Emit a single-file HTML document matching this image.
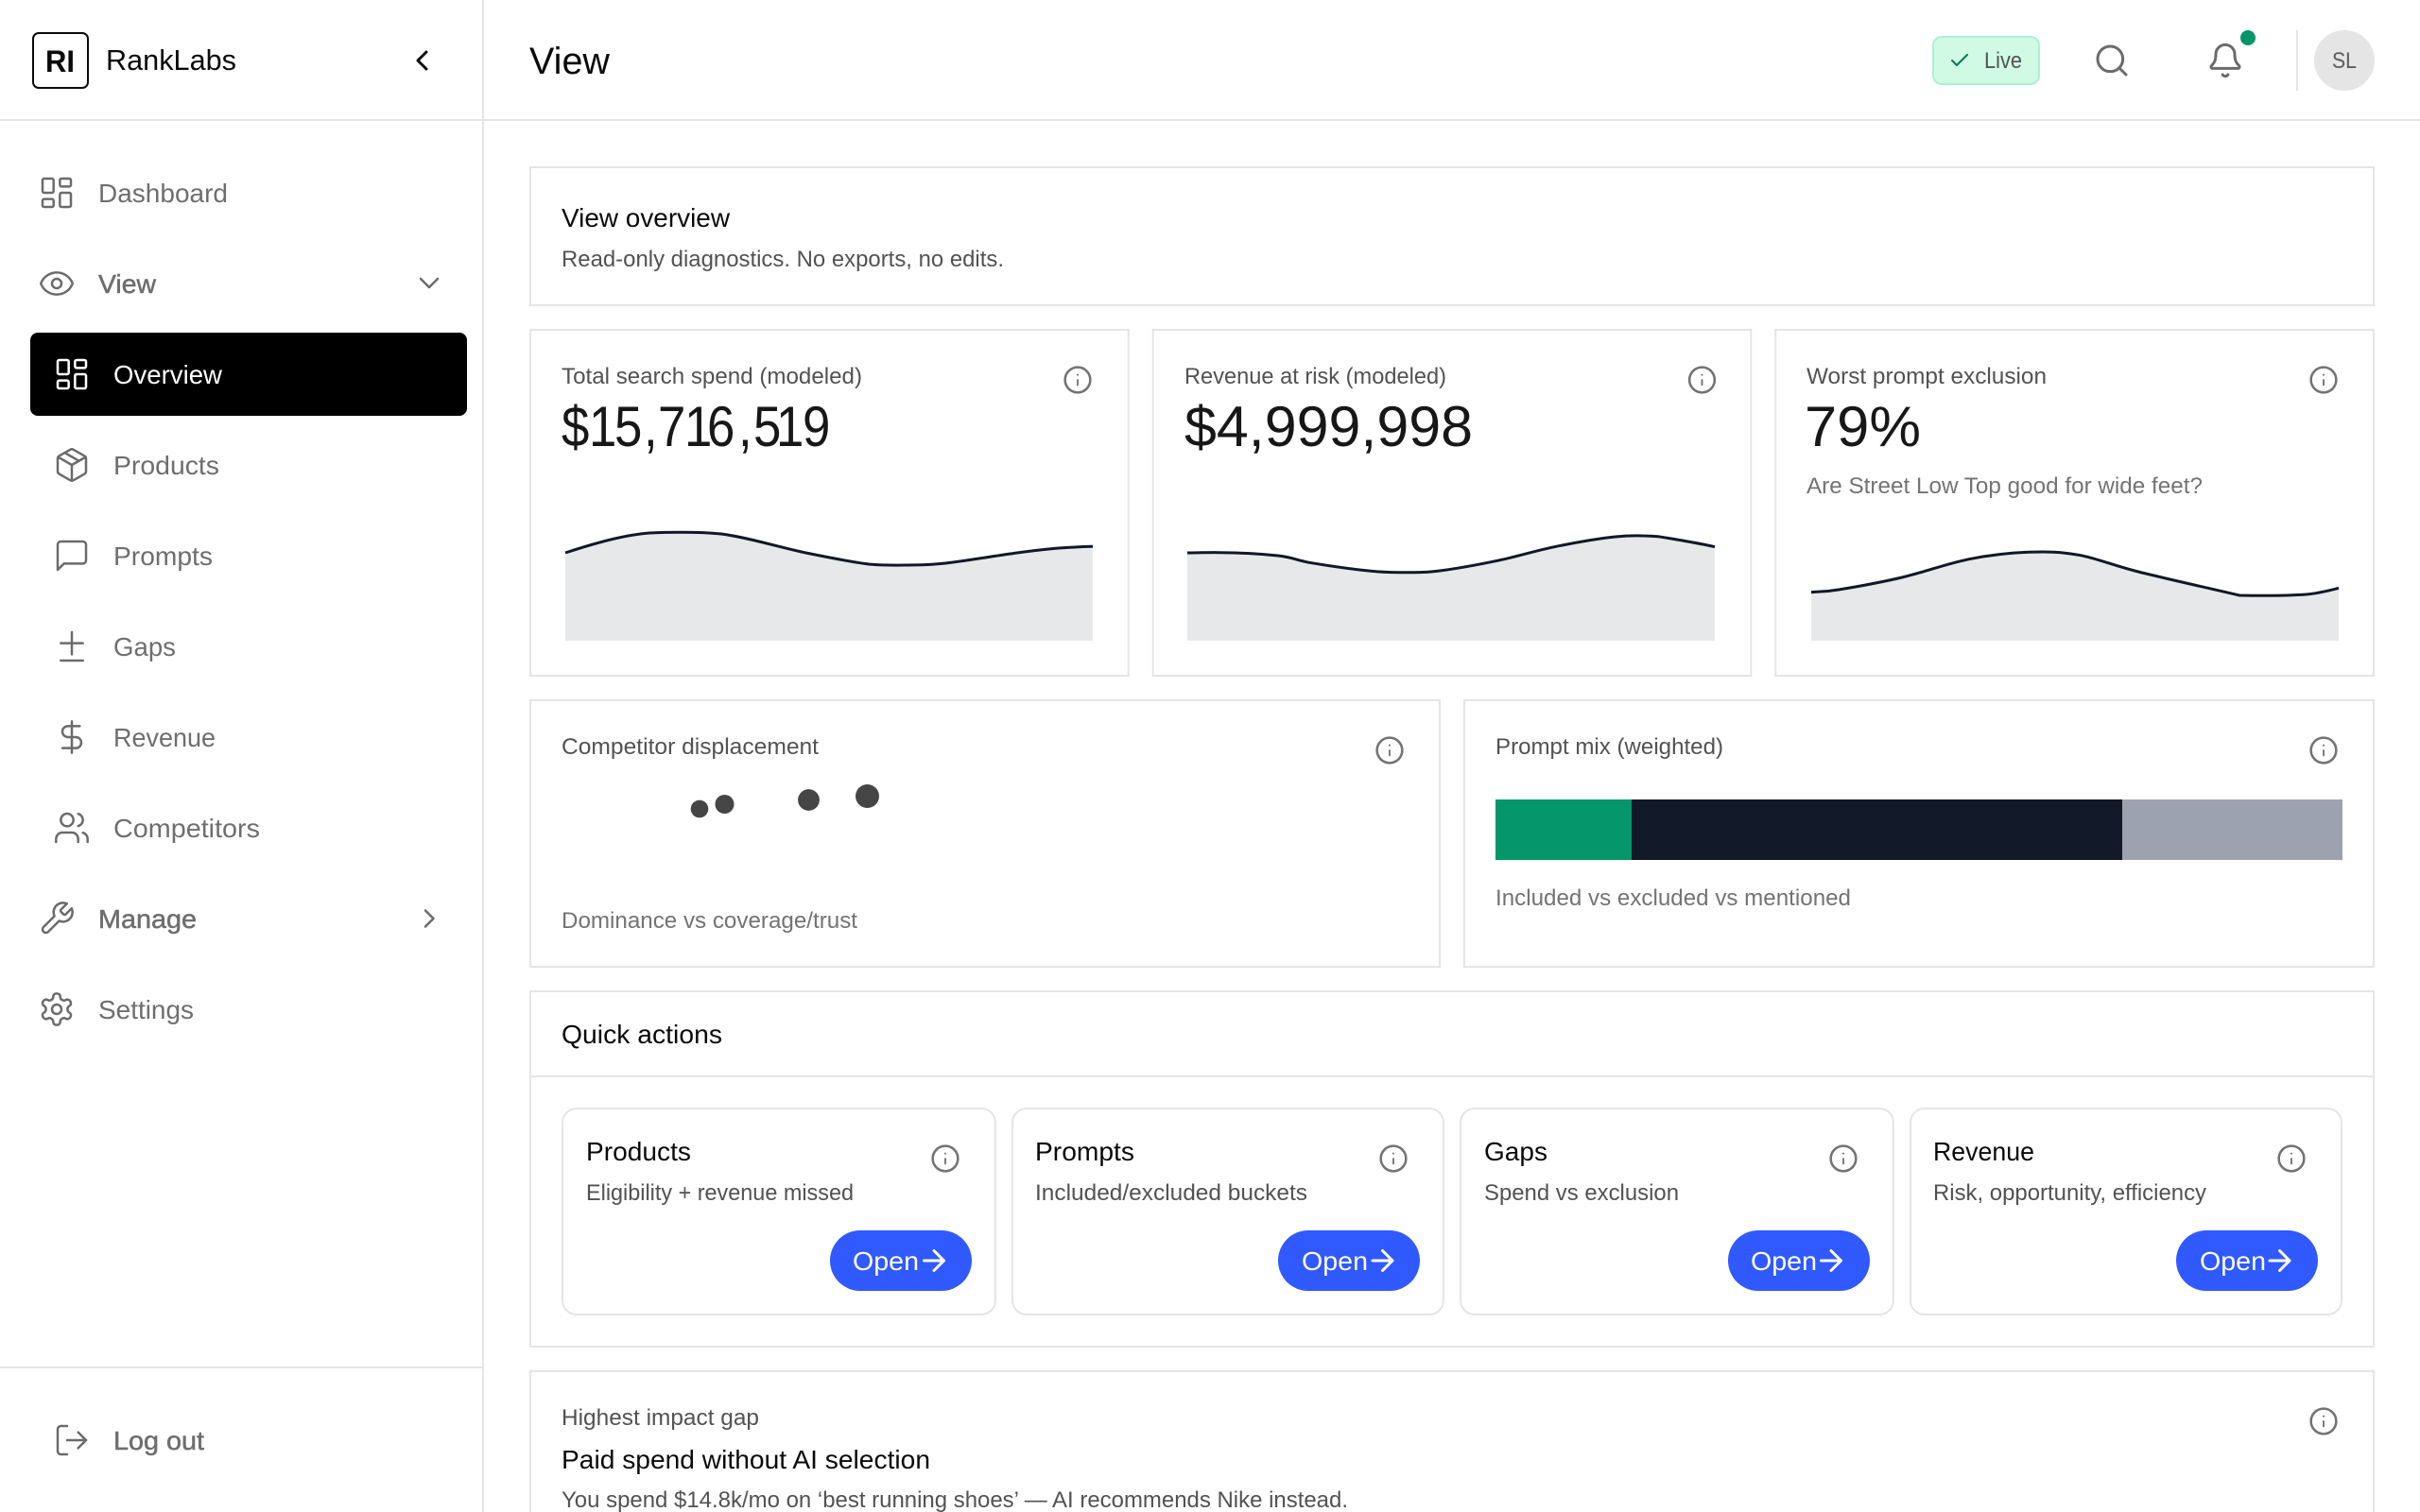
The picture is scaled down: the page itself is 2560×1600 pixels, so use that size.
<!DOCTYPE html>
<html lang="en">
<head>
<meta charset="utf-8">
<title>RankLabs - View</title>
<style>
html,body{margin:0;padding:0;width:2560px;height:1600px;overflow:hidden;background:#fff}
svg{display:block;position:absolute;left:0;top:0}
text{font-family:"Liberation Sans",Arial,sans-serif;white-space:pre}
.ic{fill:none;stroke:#6b6b6b;stroke-width:1.5;stroke-linecap:round;stroke-linejoin:round}
.side{font-size:28px;fill:#6e6e6e}
.med{stroke:#6e6e6e;stroke-width:.5px}
.label{font-size:24px;fill:#525252}
.sub{font-size:24px;fill:#737373}
.t28{font-size:28px;fill:#0a0a0a}
.num{font-size:60px;fill:#171717}
.card{fill:#fff;stroke:#e5e5e5;stroke-width:2}
.area{fill:#e7e8ea}
.line{fill:none;stroke:#111827;stroke-width:3}
.btn{fill:#3059ff}
.open{font-size:28px;fill:#fff}
</style>
</head>
<body>
<svg width="2560" height="1600" viewBox="0 0 2560 1600" xmlns="http://www.w3.org/2000/svg">
<defs>
  <g id="info"><g transform="scale(1.3333)" fill="none" stroke="#737373" stroke-width="1.9" stroke-linecap="round" stroke-linejoin="round"><circle cx="12" cy="12" r="10"/><path d="M12 16v-4" stroke-width="1.4"/><path d="M12 8h.01" stroke-width="1.6"/></g></g>
  <g id="dash"><rect width="7" height="9" x="3" y="3" rx="1"/><rect width="7" height="5" x="14" y="3" rx="1"/><rect width="7" height="9" x="14" y="12" rx="1"/><rect width="7" height="5" x="3" y="16" rx="1"/></g>
  <g id="arrow"><g transform="scale(1.5)" fill="none" stroke="#fff" stroke-width="2" stroke-linecap="round" stroke-linejoin="round"><path d="M5 12h14"/><path d="m12 5 7 7-7 7"/></g></g>
</defs>

<rect width="2560" height="1600" fill="#fff"/>

<!-- structure lines -->
<rect x="510" y="0" width="2" height="1600" fill="#e5e5e5"/>
<rect x="0" y="126" width="2560" height="2" fill="#e5e5e5"/>
<rect x="0" y="1446" width="510" height="2" fill="#e5e5e5"/>

<!-- logo -->
<rect x="35" y="35" width="58" height="58" rx="6" fill="#fff" stroke="#0a0a0a" stroke-width="2"/>
<text x="48" y="76" font-size="32" font-weight="700" fill="#0a0a0a" textLength="31" lengthAdjust="spacingAndGlyphs">RI</text>
<text x="112" y="74" font-size="31" fill="#0a0a0a" textLength="138" lengthAdjust="spacingAndGlyphs">RankLabs</text>
<path d="M451 55 442 64 451 73" fill="none" stroke="#0a0a0a" stroke-width="3" stroke-linecap="round" stroke-linejoin="round"/>

<!-- sidebar nav -->
<g transform="translate(40 184) scale(1.6667)" class="ic"><use href="#dash"/></g>
<text x="104" y="214" class="side" textLength="137" lengthAdjust="spacingAndGlyphs">Dashboard</text>

<g transform="translate(40 280) scale(1.6667)" class="ic"><path d="M2.062 12.348a1 1 0 0 1 0-.696 10.75 10.75 0 0 1 19.876 0 1 1 0 0 1 0 .696 10.75 10.75 0 0 1-19.876 0"/><circle cx="12" cy="12" r="3"/></g>
<text x="104" y="310" class="side med" textLength="61" lengthAdjust="spacingAndGlyphs">View</text>
<path d="M445 295 454 304 463 295" fill="none" stroke="#6b6b6b" stroke-width="2.5" stroke-linecap="round" stroke-linejoin="round"/>

<rect x="32" y="352" width="462" height="88" rx="8" fill="#000"/>
<g transform="translate(56 376) scale(1.6667)" class="ic" style="stroke:#fff"><use href="#dash"/></g>
<text x="120" y="406" font-size="28" fill="#fff" textLength="115" lengthAdjust="spacingAndGlyphs">Overview</text>

<g transform="translate(56 472) scale(1.6667)" class="ic"><path d="m7.5 4.27 9 5.15"/><path d="M21 8a2 2 0 0 0-1-1.73l-7-4a2 2 0 0 0-2 0l-7 4A2 2 0 0 0 3 8v8a2 2 0 0 0 1 1.73l7 4a2 2 0 0 0 2 0l7-4A2 2 0 0 0 21 16Z"/><path d="m3.3 7 8.7 5 8.7-5"/><path d="M12 22V12"/></g>
<text x="120" y="502" class="side" textLength="112" lengthAdjust="spacingAndGlyphs">Products</text>

<g transform="translate(56 568) scale(1.6667)" class="ic"><path d="M21 15a2 2 0 0 1-2 2H7l-4 4V5a2 2 0 0 1 2-2h14a2 2 0 0 1 2 2z"/></g>
<text x="120" y="598" class="side" textLength="105" lengthAdjust="spacingAndGlyphs">Prompts</text>

<g transform="translate(56 664) scale(1.6667)" class="ic"><path d="M12 3v14"/><path d="M5 10h14"/><path d="M5 21h14"/></g>
<text x="120" y="694" class="side" textLength="66" lengthAdjust="spacingAndGlyphs">Gaps</text>

<g transform="translate(56 760) scale(1.6667)" class="ic"><path d="M12 2v20"/><path d="M17 5H9.5a3.5 3.5 0 0 0 0 7h5a3.5 3.5 0 0 1 0 7H6"/></g>
<text x="120" y="790" class="side" textLength="108" lengthAdjust="spacingAndGlyphs">Revenue</text>

<g transform="translate(56 856) scale(1.6667)" class="ic"><path d="M16 21v-2a4 4 0 0 0-4-4H6a4 4 0 0 0-4 4v2"/><circle cx="9" cy="7" r="4"/><path d="M22 21v-2a4 4 0 0 0-3-3.87"/><path d="M16 3.13a4 4 0 0 1 0 7.75"/></g>
<text x="120" y="886" class="side" textLength="155" lengthAdjust="spacingAndGlyphs">Competitors</text>

<g transform="translate(40 952) scale(1.6667)" class="ic"><path d="M14.7 6.3a1 1 0 0 0 0 1.4l1.6 1.6a1 1 0 0 0 1.4 0l3.77-3.77a6 6 0 0 1-7.94 7.94l-6.91 6.91a2.12 2.12 0 0 1-3-3l6.91-6.91a6 6 0 0 1 7.94-7.94l-3.76 3.76z"/></g>
<text x="104" y="982" class="side med" textLength="104" lengthAdjust="spacingAndGlyphs">Manage</text>
<path d="M450 963.5 458.5 972 450 980.5" fill="none" stroke="#6b6b6b" stroke-width="2.5" stroke-linecap="round" stroke-linejoin="round"/>

<g transform="translate(40 1048) scale(1.6667)" class="ic"><path d="M12.22 2h-.44a2 2 0 0 0-2 2v.18a2 2 0 0 1-1 1.73l-.43.25a2 2 0 0 1-2 0l-.15-.08a2 2 0 0 0-2.73.73l-.22.38a2 2 0 0 0 .73 2.73l.15.1a2 2 0 0 1 1 1.72v.51a2 2 0 0 1-1 1.74l-.15.09a2 2 0 0 0-.73 2.73l.22.38a2 2 0 0 0 2.73.73l.15-.08a2 2 0 0 1 2 0l.43.25a2 2 0 0 1 1 1.73V20a2 2 0 0 0 2 2h.44a2 2 0 0 0 2-2v-.18a2 2 0 0 1 1-1.73l.43-.25a2 2 0 0 1 2 0l.15.08a2 2 0 0 0 2.73-.73l.22-.39a2 2 0 0 0-.73-2.73l-.15-.08a2 2 0 0 1-1-1.74v-.5a2 2 0 0 1 1-1.74l.15-.09a2 2 0 0 0 .73-2.73l-.22-.38a2 2 0 0 0-2.73-.73l-.15.08a2 2 0 0 1-2 0l-.43-.25a2 2 0 0 1-1-1.73V4a2 2 0 0 0-2-2z"/><circle cx="12" cy="12" r="3"/></g>
<text x="104" y="1078" class="side" textLength="101" lengthAdjust="spacingAndGlyphs">Settings</text>

<g transform="translate(56 1504) scale(1.6667)" class="ic"><path d="M9 21H5a2 2 0 0 1-2-2V5a2 2 0 0 1 2-2h4"/><path d="m16 17 5-5-5-5"/><path d="M21 12H9"/></g>
<text x="120" y="1534" class="side med" textLength="96" lengthAdjust="spacingAndGlyphs">Log out</text>

<!-- header -->
<text x="560" y="78" font-size="40" fill="#0a0a0a" textLength="85" lengthAdjust="spacingAndGlyphs">View</text>
<rect x="2045" y="39" width="112" height="50" rx="9" fill="#d1fae5" stroke="#a7f3d0" stroke-width="2"/>
<g transform="translate(2061 52)" fill="none" stroke="#047857" stroke-width="2" stroke-linecap="round" stroke-linejoin="round"><path d="M20 6 9 17l-5-5"/></g>
<text x="2099" y="72" font-size="24" fill="#525252" textLength="40" lengthAdjust="spacingAndGlyphs">Live</text>
<g transform="translate(2214 44) scale(1.6667)" class="ic" style="stroke-width:1.8"><path d="m21 21-4.34-4.34"/><circle cx="11" cy="11" r="8"/></g>
<g transform="translate(2334 44) scale(1.6667)" class="ic" style="stroke-width:1.8"><path d="M10.268 21a2 2 0 0 0 3.464 0"/><path d="M3.262 15.326A1 1 0 0 0 4 17h16a1 1 0 0 0 .74-1.673C19.41 13.956 18 12.499 18 8A6 6 0 0 0 6 8c0 4.499-1.411 5.956-2.738 7.326"/></g>
<circle cx="2378" cy="40" r="8" fill="#059669"/>
<rect x="2429" y="32" width="2" height="64" fill="#e5e5e5"/>
<circle cx="2480" cy="64" r="32" fill="#e5e5e5"/>
<text x="2467" y="72" font-size="24" fill="#5c5c5c" textLength="26" lengthAdjust="spacingAndGlyphs">SL</text>

<!-- view overview -->
<rect class="card" x="561" y="177" width="1950" height="146"/>
<text x="594" y="240" class="t28" textLength="178" lengthAdjust="spacingAndGlyphs">View overview</text>
<text x="594" y="282" class="label" textLength="468" lengthAdjust="spacingAndGlyphs">Read-only diagnostics. No exports, no edits.</text>

<!-- metric cards -->
<rect class="card" x="561" y="349" width="632.67" height="366"/>
<text x="594" y="406" class="label" textLength="318" lengthAdjust="spacingAndGlyphs">Total search spend (modeled)</text>
<text class="num" y="472" transform="scale(.88 1)" x="675 708 738.6 773.9 790.9 822.7 850 887.5 905.7 933 964.8">$15,716,519</text>
<use href="#info" x="1124" y="386"/>
<path class="area" d="M598 585C628 575 660 566 687 564C712 563 742 563 763 565C790.6 568.5 826.5 579.7 852.5 585C878.5 590.3 901.1 594.8 919 597C936 598.5 946.5 598.2 960 598C973.5 597.8 980.7 598.2 1000 596C1019.3 593.8 1056 587.7 1076 585C1096 582.3 1106.7 581.1 1120 580C1133.3 578.9 1144 578.5 1156 578.3V678H598Z"/>
<path class="line" d="M598 585C628 575 660 566 687 564C712 563 742 563 763 565C790.6 568.5 826.5 579.7 852.5 585C878.5 590.3 901.1 594.8 919 597C936 598.5 946.5 598.2 960 598C973.5 597.8 980.7 598.2 1000 596C1019.3 593.8 1056 587.7 1076 585C1096 582.3 1106.7 581.1 1120 580C1133.3 578.9 1144 578.5 1156 578.3"/>

<rect class="card" x="1219.67" y="349" width="632.67" height="366"/>
<text x="1253" y="406" class="label" textLength="277" lengthAdjust="spacingAndGlyphs">Revenue at risk (modeled)</text>
<text x="1253" y="472" class="num" textLength="305" lengthAdjust="spacingAndGlyphs">$4,999,998</text>
<use href="#info" x="1784.5" y="386"/>
<path class="area" d="M1256 585C1267 584.9 1278 584.6 1289 584.7C1310 584.8 1335.6 586.2 1352 588C1368.4 589.8 1371.2 593 1387.5 595.7C1403.8 598.4 1433.6 602.6 1450 604.3C1466.4 606 1474.2 605.7 1486 605.7C1497.8 605.7 1504.7 606.4 1521 604.3C1537.3 602.2 1563.2 597.6 1584 593.3C1604.8 589 1625.2 582.5 1646 578.3C1666.8 574.1 1691 569.8 1709 568C1727 566.2 1740 567 1754 567.7C1775 571.2 1794 574 1814 578.7V678H1256Z"/>
<path class="line" d="M1256 585C1267 584.9 1278 584.6 1289 584.7C1310 584.8 1335.6 586.2 1352 588C1368.4 589.8 1371.2 593 1387.5 595.7C1403.8 598.4 1433.6 602.6 1450 604.3C1466.4 606 1474.2 605.7 1486 605.7C1497.8 605.7 1504.7 606.4 1521 604.3C1537.3 602.2 1563.2 597.6 1584 593.3C1604.8 589 1625.2 582.5 1646 578.3C1666.8 574.1 1691 569.8 1709 568C1727 566.2 1740 567 1754 567.7C1775 571.2 1794 574 1814 578.7"/>

<rect class="card" x="1878.33" y="349" width="632.67" height="366"/>
<text x="1911" y="406" class="label" textLength="254" lengthAdjust="spacingAndGlyphs">Worst prompt exclusion</text>
<text x="1909" y="472" class="num" textLength="123" lengthAdjust="spacingAndGlyphs">79%</text>
<text x="1911" y="522" class="sub" textLength="419" lengthAdjust="spacingAndGlyphs">Are Street Low Top good for wide feet?</text>
<use href="#info" x="2442" y="386"/>
<path class="area" d="M1916 626.7C1925.7 625.8 1929 626.6 1945 624C1961 621.4 1989 616.4 2012 611C2035 605.6 2060.7 596.15 2083 591.7C2105.3 587.25 2126.7 585.03 2146 584.3C2165.3 583.57 2179.7 583.85 2199 587.3C2218.3 590.75 2233.7 597.9 2262 605C2290.3 612.1 2335 622 2369 630C2392 630.5 2415 630.5 2436 629.3C2450 628.5 2462 625.5 2474 622.3V678H1916Z"/>
<path class="line" d="M1916 626.7C1925.7 625.8 1929 626.6 1945 624C1961 621.4 1989 616.4 2012 611C2035 605.6 2060.7 596.15 2083 591.7C2105.3 587.25 2126.7 585.03 2146 584.3C2165.3 583.57 2179.7 583.85 2199 587.3C2218.3 590.75 2233.7 597.9 2262 605C2290.3 612.1 2335 622 2369 630C2392 630.5 2415 630.5 2436 629.3C2450 628.5 2462 625.5 2474 622.3"/>

<!-- competitor displacement -->
<rect class="card" x="561" y="741" width="962" height="282"/>
<text x="594" y="798" class="label" textLength="272" lengthAdjust="spacingAndGlyphs">Competitor displacement</text>
<use href="#info" x="1454" y="778"/>
<circle cx="740" cy="856" r="9.3" fill="#454545"/>
<circle cx="766.5" cy="851" r="10" fill="#454545"/>
<circle cx="855.5" cy="846.5" r="11.4" fill="#454545"/>
<circle cx="917.5" cy="842.5" r="12.5" fill="#454545"/>
<text x="594" y="982" class="sub" textLength="313" lengthAdjust="spacingAndGlyphs">Dominance vs coverage/trust</text>

<!-- prompt mix -->
<rect class="card" x="1549" y="741" width="962" height="282"/>
<text x="1582" y="798" class="label" textLength="241" lengthAdjust="spacingAndGlyphs">Prompt mix (weighted)</text>
<use href="#info" x="2442" y="778"/>
<rect x="1582" y="846" width="144" height="64" fill="#059669"/>
<rect x="1726" y="846" width="519" height="64" fill="#111827"/>
<rect x="2245" y="846" width="233" height="64" fill="#9ca3af"/>
<text x="1582" y="958" class="sub" textLength="376" lengthAdjust="spacingAndGlyphs">Included vs excluded vs mentioned</text>

<!-- quick actions -->
<rect class="card" x="561" y="1049" width="1950" height="376"/>
<text x="594" y="1104" class="t28" textLength="170" lengthAdjust="spacingAndGlyphs">Quick actions</text>
<rect x="562" y="1138" width="1948" height="2" fill="#e5e5e5"/>

<rect class="card" x="595" y="1173" width="458" height="218" rx="15"/>
<text x="620" y="1228" class="t28" textLength="111" lengthAdjust="spacingAndGlyphs">Products</text>
<text x="620" y="1270" class="label" textLength="283" lengthAdjust="spacingAndGlyphs">Eligibility + revenue missed</text>
<use href="#info" x="984" y="1210"/>
<rect class="btn" x="878" y="1302" width="150" height="64" rx="32"/>
<text x="902" y="1344" class="open" textLength="70" lengthAdjust="spacingAndGlyphs">Open</text>
<use href="#arrow" x="970" y="1316"/>

<rect class="card" x="1071" y="1173" width="456" height="218" rx="15"/>
<text x="1095" y="1228" class="t28" textLength="105" lengthAdjust="spacingAndGlyphs">Prompts</text>
<text x="1095" y="1270" class="label" textLength="288" lengthAdjust="spacingAndGlyphs">Included/excluded buckets</text>
<use href="#info" x="1458" y="1210"/>
<rect class="btn" x="1352" y="1302" width="150" height="64" rx="32"/>
<text x="1377" y="1344" class="open" textLength="70" lengthAdjust="spacingAndGlyphs">Open</text>
<use href="#arrow" x="1444.5" y="1316"/>

<rect class="card" x="1545" y="1173" width="458" height="218" rx="15"/>
<text x="1570" y="1228" class="t28" textLength="67" lengthAdjust="spacingAndGlyphs">Gaps</text>
<text x="1570" y="1270" class="label" textLength="206" lengthAdjust="spacingAndGlyphs">Spend vs exclusion</text>
<use href="#info" x="1934" y="1210"/>
<rect class="btn" x="1828" y="1302" width="150" height="64" rx="32"/>
<text x="1852" y="1344" class="open" textLength="70" lengthAdjust="spacingAndGlyphs">Open</text>
<use href="#arrow" x="1919" y="1316"/>

<rect class="card" x="2021" y="1173" width="456" height="218" rx="15"/>
<text x="2045" y="1228" class="t28" textLength="107" lengthAdjust="spacingAndGlyphs">Revenue</text>
<text x="2045" y="1270" class="label" textLength="289" lengthAdjust="spacingAndGlyphs">Risk, opportunity, efficiency</text>
<use href="#info" x="2408" y="1210"/>
<rect class="btn" x="2302" y="1302" width="150" height="64" rx="32"/>
<text x="2327" y="1344" class="open" textLength="70" lengthAdjust="spacingAndGlyphs">Open</text>
<use href="#arrow" x="2393.5" y="1316"/>

<!-- highest impact gap -->
<path d="M561 1600V1451H2511V1600" fill="#fff" stroke="#e5e5e5" stroke-width="2"/>
<text x="594" y="1508" class="label" textLength="209" lengthAdjust="spacingAndGlyphs">Highest impact gap</text>
<text x="594" y="1554" class="t28" textLength="390" lengthAdjust="spacingAndGlyphs">Paid spend without AI selection</text>
<text x="594" y="1595" class="label" textLength="832" lengthAdjust="spacingAndGlyphs">You spend $14.8k/mo on ‘best running shoes’ — AI recommends Nike instead.</text>
<use href="#info" x="2442" y="1488"/>
</svg>
</body>
</html>
